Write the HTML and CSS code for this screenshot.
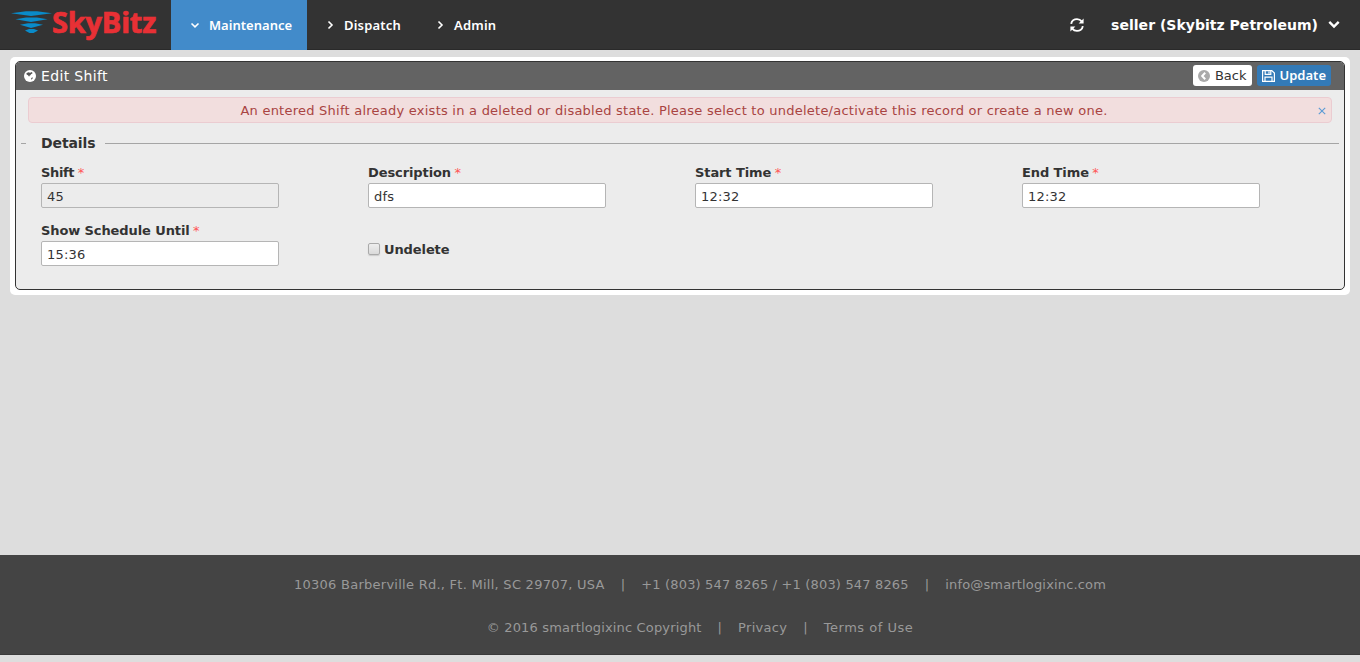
FILE: index.html
```html
<!DOCTYPE html>
<html lang="en">
<head>
<meta charset="utf-8">
<title>Edit Shift</title>
<link rel="stylesheet" href="styles.css">
</head>
<body>
<header class="topbar">
  <a class="logo">
    <svg class="logo-mark" width="42" height="26" viewBox="0 0 42 26" fill="#0a8bc9"><path d="M0 4.300L15 2.200H26L41 4.300L20 7Z"/><path d="M4.500 10.200L15 8.400H26L36.500 10.200L20 13Z"/><path d="M9 15.700L17 14.300H24L32 15.700L20 19Z"/><path d="M14 21.500L18 20H23L27 21.500L22.500 24H18.500Z"/></svg>
    <span class="logo-text">SkyBitz</span>
  </a>
  <nav class="nav">
    <a class="nav-item active"><svg width="10" height="10" viewBox="0 0 10 10"><path d="M1.500 3.500L5 6.800L8.500 3.500"/></svg><span>Maintenance</span></a>
    <a class="nav-item"><svg width="10" height="10" viewBox="0 0 10 10"><path d="M2.500 1.500L6 5L2.500 8.500"/></svg><span>Dispatch</span></a>
    <a class="nav-item"><svg width="10" height="10" viewBox="0 0 10 10"><path d="M2.500 1.500L6 5L2.500 8.500"/></svg><span>Admin</span></a>
  </nav>
  <div class="account">
    <svg class="refresh" width="14" height="14" viewBox="0 0 14 14"><path class="arc" d="M1.200 5.800C1.600 2.800 4.300 1.100 7 1.100C9 1.100 10.600 1.900 11.700 3.300M12.800 8.200C12.400 11.200 9.700 12.900 7 12.900C5 12.900 3.400 12.100 2.300 10.700"/><path class="head" d="M13.600 .4V5.500H8.600ZM.4 13.600V8.500H5.400Z"/></svg>
    <span class="user">seller (Skybitz Petroleum)</span>
    <svg class="caret" width="12" height="10" viewBox="0 0 12 10"><path d="M1.300 1.800L6 6.500L10.700 1.800"/></svg>
  </div>
</header>

<main class="frame">
  <section class="panel">
    <div class="panel-head">
      <svg width="12" height="12" viewBox="0 0 12 12"><circle cx="6" cy="6" r="6" fill="#fff"/><path fill="#555" d="M2.400 3.200L4.300 2.200L6.200 2.800L7.900 1.900L8.600 3.200L7 4.200L6.400 5.200L5.500 5.700L5.100 6.800L4 5.200L2.600 4.600ZM7.200 8L8.800 7.200L8.500 8.800L7.200 9.800Z"/></svg>
      <h1 class="panel-title">Edit Shift</h1>
      <div class="actions">
        <button class="btn back"><svg width="12" height="12" viewBox="0 0 12 12"><circle cx="6" cy="6" r="6" fill="#aaa"/><path d="M7.200 2.800L4.200 6L7.200 9.200" fill="none" stroke="#fff" stroke-width="2"/></svg><span>Back</span></button>
        <button class="btn update"><svg width="13" height="12" viewBox="0 0 13 12" fill="none" stroke="#fff" stroke-width="1.200"><path d="M.6 .6H9.800L12.400 3V11.400H.6ZM3.200 .6V4.400H8.800V.6M3 11.400V7.200H10V11.400M7 1.500V3.500"/></svg><span>Update</span></button>
      </div>
    </div>
    <div class="alert">
      <span class="alert-text">An entered Shift already exists in a deleted or disabled state. Please select to undelete/activate this record or create a new one.</span>
      <svg width="8" height="8" viewBox="0 0 8 8"><path d="M.8 .8L7.200 7.200M7.200 .8L.8 7.200"/></svg>
    </div>
    <div class="legend"><h2>Details</h2></div>
    <form class="fields">
      <div class="field"><label><span class="short">Shift</span> <i>*</i></label><input value="45" disabled></div>
      <div class="field"><label>Description <i>*</i></label><input value="dfs"></div>
      <div class="field"><label>Start Time <i>*</i></label><input value="12:32"></div>
      <div class="field"><label>End Time <i>*</i></label><input value="12:32"></div>
      <div class="field"><label>Show Schedule Until <i>*</i></label><input value="15:36"></div>
      <div class="check"><input class="box" type="checkbox"><label>Undelete</label></div>
    </form>
  </section>
</main>

<footer class="footer">
  <div class="line"><span class="address">10306 Barberville Rd., Ft. Mill, SC 29707, USA</span><span>|</span><span>+1 (803) 547 8265 / +1 (803) 547 8265</span><span>|</span><span>info@smartlogixinc.com</span></div>
  <div class="line"><span>© 2016 smartlogixinc Copyright</span><span>|</span><span class="privacy">Privacy</span><span>|</span><span class="terms">Terms of Use</span></div>
</footer>
</body>
</html>
```
FILE: styles.css
```css
* { box-sizing: border-box; }
body { margin: 0; height: 662px; display: flex; flex-direction: column; background: #ddd; color: #333; font: 13px/18px "DejaVu Sans", sans-serif; overflow: hidden; }
h1, h2 { margin: 0; }
svg { flex: none; }
.topbar { height: 50px; background: #333; display: flex; color: #fff; border-bottom: 1px solid #2a2a2a; }
.logo { width: 171px; padding: 9px 0 0 11px; display: flex; }
.logo-text { font: bold 29px/30px "Open Sans", sans-serif; color: #e83035; margin: -2px 0 0 -1px; letter-spacing: -.2px; -webkit-text-stroke: .7px #e83035; }
.nav { display: flex; font: 600 13px/18px "Noto Sans", sans-serif; }
.nav-item { width: 110px; height: 50px; display: flex; align-items: center; padding-left: 19px; }
.nav-item svg { margin-right: 8px; fill: none; stroke: #fff; stroke-width: 1.600; }
.nav-item span { letter-spacing: .2px; }
.nav-item.active { width: 136px; background: #428bca; }
.active svg { margin-right: 9px; }
.active span { letter-spacing: .03px; }
.account { margin-left: auto; display: flex; align-items: center; padding-right: 20px; }
.refresh { margin-right: 27px; }
.arc { fill: none; stroke: #fff; stroke-width: 1.900; }
.head { fill: #fff; }
.user { font: bold 14px/18px "DejaVu Sans", sans-serif; letter-spacing: .02px; }
.caret { margin-left: 10px; fill: none; stroke: #fff; stroke-width: 2.400; }
.frame { margin: 7px 10px 0; height: 238px; padding: 4px 5px 5px; background: #fff; border-radius: 5px; }
.panel { height: 229px; border: 1px solid #333; border-radius: 5px; background: #ececec; overflow: hidden; }
.panel-head { height: 28px; background: #636363; color: #fff; display: flex; align-items: center; padding: 0 13px 0 8px; }
.panel-title { font: 14px/18px "DejaVu Sans", sans-serif; margin-left: 5px; letter-spacing: .35px; }
.actions { margin-left: auto; display: flex; gap: 5px; padding-bottom: 1px; }
.btn { border: 0; border-radius: 3px; height: 21px; padding: 0 5px; display: flex; align-items: center; gap: 5px; font: 13px/18px "DejaVu Sans", sans-serif; color: #333; background: #fff; }
.update { background: #337ab7; color: #fff; font: 600 13px/18px "Noto Sans", sans-serif; }
.update span { padding-bottom: 2px; }
.alert { margin: 7px 12px 0; height: 26px; border: 1px solid #ebccd1; border-radius: 4px; background: #f2dede; color: #a94442; display: flex; align-items: center; padding: 1px 5px 0 0; }
.alert-text { flex: 1; text-align: center; letter-spacing: .24px; padding: 1px 0 0 1px; }
.alert svg { fill: none; stroke: #5b9bd5; stroke-width: 1.100; }
.legend { display: flex; align-items: center; height: 20px; margin: 10px 5px 0; }
.legend::before { content: ""; width: 5px; height: 1px; background: #a5a5a5; margin-right: 15px; }
.legend::after { content: ""; flex: 1; height: 1px; background: #a5a5a5; margin-left: 9px; }
.legend h2 { font: bold 14px/18px "DejaVu Sans", sans-serif; letter-spacing: -.1px; }
.fields { display: grid; grid-template-columns: repeat(4, 327px); grid-auto-rows: 58px; padding: 10px 0 0 25px; }
.field label { display: block; height: 20px; padding-top: 1px; font-weight: bold; white-space: nowrap; letter-spacing: -.1px; }
.short { letter-spacing: -.35px; }
.field i { font-style: normal; font-weight: normal; color: #f55; margin-left: -1px; }
.field input { display: block; width: 238px; height: 25px; padding: 2px 5px 0; border: 1px solid #b5b5b5; border-radius: 2px; background: #fff; color: #333; font: 13px/18px "DejaVu Sans", sans-serif; letter-spacing: .2px; }
.field input:disabled { background: #ececec; }
.check { display: flex; align-items: center; height: 18px; margin-top: 19px; font-weight: bold; letter-spacing: -.1px; }
.check label { padding-top: 2px; }
.box { appearance: none; width: 12px; height: 12px; margin: 0 4px 0 0; border: 1px solid #aaa; border-radius: 2px; background: linear-gradient(#eee, #dadada); box-shadow: 0 1px 1px #ccc; }
.footer { margin-top: 260px; height: 100px; background: #444; color: #999; display: flex; flex-direction: column; padding-top: 21px; gap: 25px; border-bottom: 1px solid #3a3a3a; }
.line { display: flex; justify-content: center; gap: 16px; letter-spacing: .16px; white-space: nowrap; padding-left: 40px; }
.address { letter-spacing: .26px; }
.privacy { letter-spacing: .3px; }
.terms { letter-spacing: .5px; }
```
